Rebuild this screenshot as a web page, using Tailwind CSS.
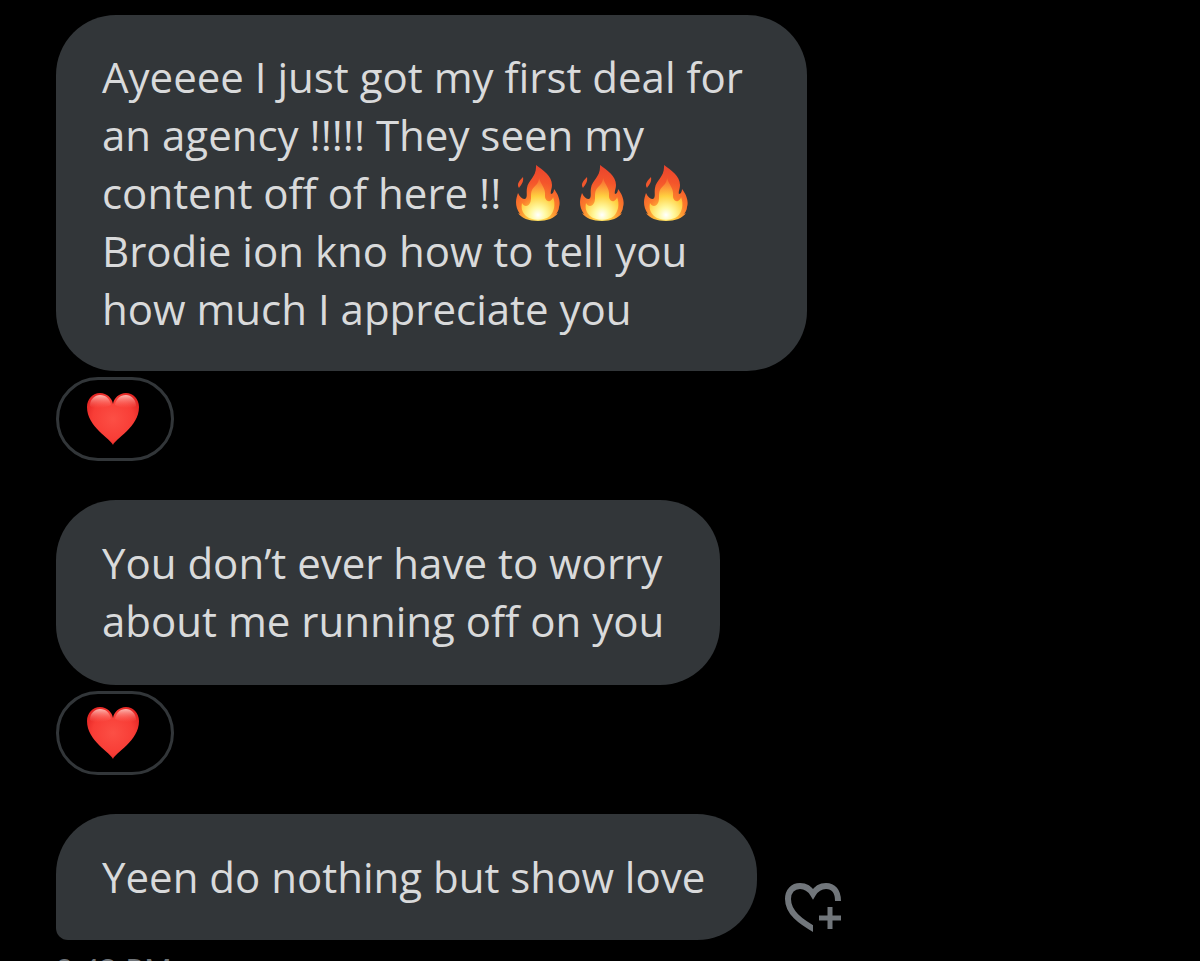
<!DOCTYPE html>
<html lang="en">
<head>
<meta charset="utf-8">
<meta name="viewport" content="width=device-width, initial-scale=1">
<title>Messages</title>
<script src="https://cdn.jsdelivr.net/npm/@tailwindcss/browser@4"></script>
</head>
<body class="bg-black h-screen overflow-hidden font-['Open_Sans',sans-serif] font-[450] text-[42px] leading-[58px] text-[#d9dadb]">
<svg class="absolute size-0" aria-hidden="true">
  <defs>
    <radialGradient id="flameOuter" gradientUnits="userSpaceOnUse" cx="22" cy="52" r="50">
      <stop offset="0" stop-color="#fff27a"/><stop offset=".2" stop-color="#ffc23c"/><stop offset=".42" stop-color="#fb7c2c"/><stop offset=".7" stop-color="#f4552b"/><stop offset="1" stop-color="#ea452d"/>
    </radialGradient>
    <radialGradient id="flameInner" gradientUnits="userSpaceOnUse" cx="22" cy="50" r="38">
      <stop offset="0" stop-color="#ffffff"/><stop offset=".2" stop-color="#fff9a0"/><stop offset=".5" stop-color="#ffd040"/><stop offset="1" stop-color="#fc8038" stop-opacity=".4"/>
    </radialGradient>
    <radialGradient id="heartFill" gradientUnits="userSpaceOnUse" cx="26" cy="26" r="34">
      <stop offset="0" stop-color="#fc4f45"/><stop offset=".6" stop-color="#f83d36"/><stop offset="1" stop-color="#dc1c1c"/>
    </radialGradient>
    <linearGradient id="heartShine" x1="0" y1="0" x2="0" y2="1">
      <stop offset="0" stop-color="#ffc9c2" stop-opacity=".9"/><stop offset="1" stop-color="#ff6a60" stop-opacity="0"/>
    </linearGradient>
    <clipPath id="plusCutout"><path d="M0 0H56V18H28V50H0Z"/></clipPath>
    <symbol id="flame" viewBox="0 0 44 56">
      <path fill="url(#flameOuter)" d="M20 0C27 5 36 11 36 20C36 24 34 27 35 29C37 29 38 26 38 24C42 29 45 36 43 42C43 45 41 48 40 49L42 48C39 53 31 56 22 56C13 56 5 53 2 48L4 49C1 45 0 41 0 37C0 34 1 31 2 28C4 32 6 34 9 34C12 32 10 28 11 23C12 15 21 12 20 0Z"/>
      <path fill="#f0562c" d="M7 12C8 17 5 20 3 23C0 19 4 15 7 12Z"/>
      <path fill="url(#flameInner)" d="M23 13C25 20 30 23 29 31C29 34 31 37 34 36C36 35 37 33 37 32C40 39 38 47 34 51C28 56 16 56 10 51C6 47 5 43 6 38C8 42 12 42 14 38C16 34 14 29 16 25C18 21 23 19 23 13Z"/>
    </symbol>
    <symbol id="heart" viewBox="0 0 52 52">
      <path fill="url(#heartFill)" d="M26 52C24 46 0 34 0 14C0 6 6 0 13 0C20 0 25 5 26 11C27 5 32 0 39 0C46 0 52 6 52 14C52 34 28 46 26 52Z"/>
      <path fill="url(#heartShine)" d="M3 13C3 6 8 2 13 2C19 2 23 6 24 12C18 15 8 17 3 13ZM49 13C49 6 44 2 39 2C33 2 29 6 28 12C34 15 44 17 49 13Z"/>
    </symbol>
  </defs>
</svg>
<main class="flex flex-col items-start pl-14 pt-[15px]">
  <p class="w-fit rounded-[60px] bg-[#323639] py-[33px] pl-[46px] pr-16">Ayeeee I just got my first deal for<br>an agency !!!!! They seen my<br><span class="flex items-center">content off of here !!<span class="ml-[15px] flex gap-5" role="img" aria-label="Three flames"><svg class="h-14 w-11"><use href="#flame"/></svg><svg class="h-14 w-11"><use href="#flame"/></svg><svg class="h-14 w-11"><use href="#flame"/></svg></span></span>Brodie ion kno how to tell you<br>how much I appreciate you</p>
  <button class="mt-[6px] flex h-[84px] w-[118px] items-center justify-center rounded-full border-3 border-[#323639]" aria-label="Heart reaction"><svg class="mr-1 size-[52px]"><use href="#heart"/></svg></button>
  <p class="mt-[39px] w-fit rounded-[60px] bg-[#323639] pt-[34px] pb-[35px] pl-[46px] pr-14">You don’t ever have to worry<br>about me running off on you</p>
  <button class="mt-[6px] flex h-[84px] w-[118px] items-center justify-center rounded-full border-3 border-[#323639]" aria-label="Heart reaction"><svg class="mr-1 size-[52px]"><use href="#heart"/></svg></button>
  <div class="mt-[39px] flex items-end gap-7">
    <p class="w-fit rounded-[60px] rounded-bl-[12px] bg-[#323639] py-[34px] pl-[46px] pr-[52px]">Yeen do nothing but show love</p>
    <button class="mb-[7px]" aria-label="Add reaction"><svg class="h-[50px] w-14" viewBox="0 0 56 50" fill="none" stroke="#71767b"><path clip-path="url(#plusCutout)" stroke-width="6" d="M34 49C14 38 3 29 3 16C3 8 8 3 15 3C21 3 25 6 28 11C31 6 35 3 41 3C48 3 53 8 53 18"/><path stroke-width="5" d="M34 35H56M45 24V46"/></svg></button>
  </div>
  <time class="mt-[9px] text-[31px] leading-10 text-[#71767b]">9:42 PM</time>
</main>
</body>
</html>
